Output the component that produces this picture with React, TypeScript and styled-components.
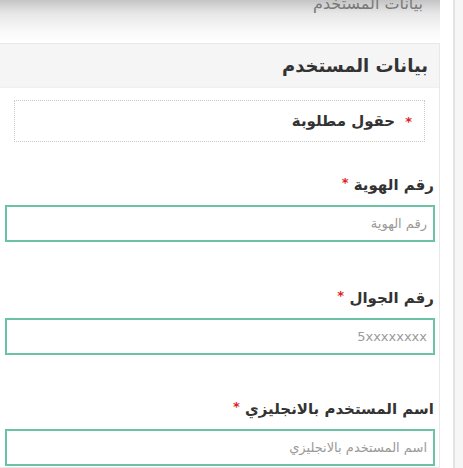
import styled, { createGlobalStyle } from "styled-components";

const GlobalStyle = createGlobalStyle`
  html, body {
    margin: 0;
    padding: 0;
    background: #ffffff;
  }
  body {
    font-family: "DejaVu Sans", "Noto Sans", sans-serif;
    overflow: hidden;
  }
`;

const fields = [
  { label: "رقم الهوية", placeholder: "رقم الهوية", gap: 29 },
  { label: "رقم الجوال", placeholder: "5xxxxxxxx", gap: 42 },
  { label: "اسم المستخدم بالانجليزي", placeholder: "اسم المستخدم بالانجليزي", gap: 40 },
];

const App = () => {
  return (
    <Page dir="rtl">
      <GlobalStyle />
      <SideStrip />
      <Main>
        <TopBar>
          <Crumb>بيانات المستخدم</Crumb>
        </TopBar>
        <Panel>
          <PanelHeader>
            <PanelTitle>بيانات المستخدم</PanelTitle>
          </PanelHeader>
          <PanelBody>
            <RequiredNote>
              <NoteStar>*</NoteStar>
              <span>حقول مطلوبة</span>
            </RequiredNote>
            {fields.map((f) => (
              <FormGroup key={f.label} $gap={f.gap}>
                <Label>
                  {f.label} <Star>*</Star>
                </Label>
                <Input placeholder={f.placeholder} />
              </FormGroup>
            ))}
          </PanelBody>
        </Panel>
      </Main>
    </Page>
  );
};

export default App;

const Page = styled.div`
  display: flex;
  width: 463px;
  height: 468px;
  overflow: hidden;
`;

const SideStrip = styled.div`
  width: 8px;
  flex-shrink: 0;
  margin-left: 13px;
  background: #f6f6f6;
  border-left: 2px solid #e3e3e3;
`;

const Main = styled.div`
  width: 440px;
  flex-shrink: 0;
  display: flex;
  flex-direction: column;
`;

const TopBar = styled.div`
  height: 43px;
  background: linear-gradient(#c4c4c4 0%, #e6e6e6 30%, #f8f8f8 70%, #ffffff 100%);
  padding-right: 17px;
  overflow: hidden;
`;

const Crumb = styled.div`
  margin-top: -6px;
  font-size: 16px;
  color: #7a7a7a;
`;

const Panel = styled.div`
  border: 1px solid #e8e8e8;
  border-left: none;
  flex: 1;
`;

const PanelHeader = styled.div`
  height: 43px;
  background: #f5f5f5;
  border-bottom: 1px solid #f0f0f0;
  display: flex;
  align-items: center;
  padding-right: 11px;
`;

const PanelTitle = styled.h2`
  margin: 0;
  font-size: 18px;
  font-weight: bold;
  color: #333333;
`;

const PanelBody = styled.div`
  padding: 12px 4px 0 5px;
`;

const RequiredNote = styled.div`
  margin: 0 10px 0 9px;
  height: 40px;
  border: 1px dotted #c8c8c8;
  display: flex;
  align-items: center;
  padding-right: 12px;
  font-size: 15px;
  font-weight: bold;
  color: #333333;
`;

const Star = styled.span`
  color: #e0211b;
  font-size: 13px;
  vertical-align: 3px;
`;

const NoteStar = styled(Star)`
  margin-left: 10px;
`;

const FormGroup = styled.div<{ $gap: number }>`
  margin-top: ${({ $gap }) => $gap}px;
`;

const Label = styled.label`
  display: block;
  height: 24px;
  line-height: 24px;
  margin-bottom: 10px;
  padding-right: 1px;
  font-size: 15px;
  font-weight: bold;
  color: #333333;
`;

const Input = styled.input`
  display: block;
  box-sizing: border-box;
  width: 100%;
  height: 37px;
  border: 2px solid #6cc2a6;
  padding: 0 6px;
  font-family: "DejaVu Sans", sans-serif;
  font-size: 13px;
  color: #555555;
  background: #ffffff;
  outline: none;

  &::placeholder {
    color: #9a9a9a;
  }
`;
